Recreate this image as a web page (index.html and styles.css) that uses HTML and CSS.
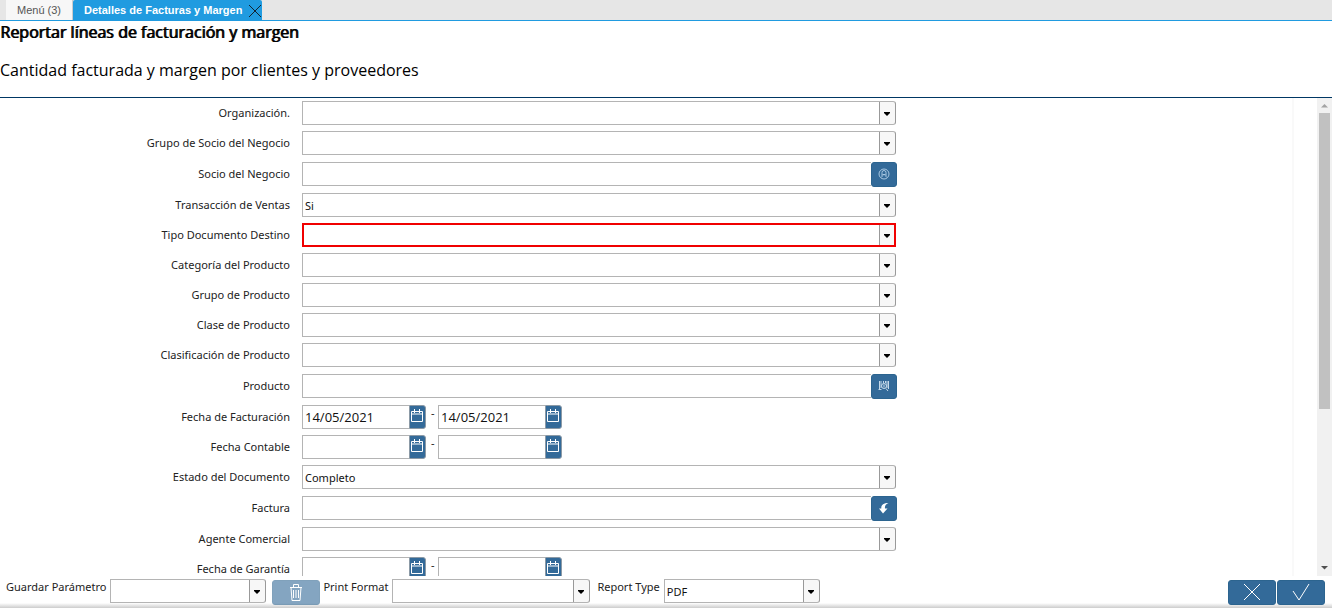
FILE: index.html
```html
<!DOCTYPE html>
<html lang="es">
<head>
    <meta charset="UTF-8">
    <meta name="viewport" content="width=device-width, initial-scale=1.0">
    <title>Detalles de Facturas y Margen</title>
    <link rel="stylesheet" href="styles.css">
</head>
<body>
<!-- Shared icons -->
<svg class="sprite" aria-hidden="true">
    <symbol id="icon-calendar" viewBox="0 0 14 14">
        <path d="M1.5 2.5h11v10h-11zM1 5h12M4.5 0v4M9.5 0v4" fill="none" stroke="#fff" stroke-width="1"/>
    </symbol>
</svg>

<nav class="tabs">
    <button type="button" class="tab">Menú (3)</button>
    <button type="button" class="tab active">Detalles de Facturas y Margen
        <svg class="tab-close" viewBox="0 0 14 14"><path d="M1 2l12 12M13 2L1 14" stroke="#12232f"/></svg>
    </button>
</nav>

<header class="heading">
    <h1>Reportar líneas de facturación y margen</h1>
    <p>Cantidad facturada y margen por clientes y proveedores</p>
</header>

<main class="content">
    <form class="params" id="params">
        <div class="row">
            <label for="org">Organización.</label>
            <select id="org" class="combo"><option></option></select>
        </div>
        <div class="row">
            <label for="bp-group">Grupo de Socio del Negocio</label>
            <select id="bp-group" class="combo"><option></option></select>
        </div>
        <div class="row lookup">
            <label for="bpartner">Socio del Negocio</label>
            <div class="field">
                <input type="text" id="bpartner">
                <button type="button" aria-label="Buscar socio">
                    <svg viewBox="0 0 12 12" width="12" height="12" fill="none" stroke="#a9c8e2"><circle cx="6" cy="6" r="5"/><path d="M4 8V4.500a2 2 0 0 1 4 0V8M4.500 6.500h3M3 9.500l2-2M9 9.500l-2-2"/></svg>
                </button>
            </div>
        </div>
        <div class="row">
            <label for="sales-trx">Transacción de Ventas</label>
            <select id="sales-trx" class="combo"><option>Si</option><option>No</option></select>
        </div>
        <div class="row">
            <label for="doctype">Tipo Documento Destino</label>
            <select id="doctype" class="combo invalid"><option></option></select>
        </div>
        <div class="row">
            <label for="category">Categoría del Producto</label>
            <select id="category" class="combo"><option></option></select>
        </div>
        <div class="row">
            <label for="product-group">Grupo de Producto</label>
            <select id="product-group" class="combo"><option></option></select>
        </div>
        <div class="row">
            <label for="product-class">Clase de Producto</label>
            <select id="product-class" class="combo"><option></option></select>
        </div>
        <div class="row">
            <label for="classification">Clasificación de Producto</label>
            <select id="classification" class="combo"><option></option></select>
        </div>
        <div class="row lookup">
            <label for="product">Producto</label>
            <div class="field">
                <input type="text" id="product">
                <button type="button" aria-label="Buscar producto">
                    <svg viewBox="0 0 12 12" width="12" height="12" fill="none" stroke="#c5daea"><path d="M1.500 1v8M3 1v7M5.500 1v2M7.500 1v2M9 1v7M10.500 1v8M.5 9.500h3M8 8.500l2 2.500"/><circle cx="6" cy="6" r="2.500"/><path d="M6 4.500v3"/></svg>
                </button>
            </div>
        </div>
        <div class="row">
            <label for="invoiced-from">Fecha de Facturación</label>
            <div class="dates">
                <div class="date"><input type="text" id="invoiced-from" value="14/05/2021"><button type="button" aria-label="Calendario"><svg width="14" height="14"><use href="#icon-calendar"/></svg></button></div>
                <span>-</span>
                <div class="date"><input type="text" aria-label="Fecha de Facturación hasta" value="14/05/2021"><button type="button" aria-label="Calendario"><svg width="14" height="14"><use href="#icon-calendar"/></svg></button></div>
            </div>
        </div>
        <div class="row">
            <label for="account-from">Fecha Contable</label>
            <div class="dates">
                <div class="date"><input type="text" id="account-from"><button type="button" aria-label="Calendario"><svg width="14" height="14"><use href="#icon-calendar"/></svg></button></div>
                <span>-</span>
                <div class="date"><input type="text" aria-label="Fecha Contable hasta"><button type="button" aria-label="Calendario"><svg width="14" height="14"><use href="#icon-calendar"/></svg></button></div>
            </div>
        </div>
        <div class="row">
            <label for="docstatus">Estado del Documento</label>
            <select id="docstatus" class="combo"><option>Completo</option></select>
        </div>
        <div class="row lookup">
            <label for="invoice">Factura</label>
            <div class="field">
                <input type="text" id="invoice">
                <button type="button" aria-label="Buscar factura">
                    <svg viewBox="0 0 12 12" width="12" height="12"><path d="M10.500 1C5.500 1 3 3 3.300 6.500H1L5 11.500l4.500-5H7C6.500 4 8 2 10.500 1z" fill="#fff"/></svg>
                </button>
            </div>
        </div>
        <div class="row">
            <label for="sales-rep">Agente Comercial</label>
            <select id="sales-rep" class="combo"><option></option></select>
        </div>
        <div class="row">
            <label for="guarantee-from">Fecha de Garantía</label>
            <div class="dates">
                <div class="date"><input type="text" id="guarantee-from"><button type="button" aria-label="Calendario"><svg width="14" height="14"><use href="#icon-calendar"/></svg></button></div>
                <span>-</span>
                <div class="date"><input type="text" aria-label="Fecha de Garantía hasta"><button type="button" aria-label="Calendario"><svg width="14" height="14"><use href="#icon-calendar"/></svg></button></div>
            </div>
        </div>
    </form>
    <div class="gutter"></div>
    <div class="scrollbar" aria-hidden="true">
        <svg viewBox="0 0 15 15" width="15" height="15"><path d="M4 9.500h7L7.500 6z" fill="#a3a3a3"/></svg>
        <div class="track"><div class="thumb"></div></div>
        <svg viewBox="0 0 15 15" width="15" height="15"><path d="M4 5h7L7.500 8.500z" fill="#505050"/></svg>
    </div>
</main>

<footer class="toolbar">
    <label for="saved">Guardar Parámetro</label>
    <select id="saved" class="combo"><option></option></select>
    <button type="button" class="action delete" disabled aria-label="Eliminar">
        <svg viewBox="0 0 16 18" width="16" height="18" fill="none" stroke="#fff"><path d="M2 3.500h12M5.500 3V.5h5V3M3 3.500l1 13h8l1-13M5.500 6v8M8 6v8M10.500 6v8"/></svg>
    </button>
    <label for="print-format">Print Format</label>
    <select id="print-format" class="combo wide"><option></option></select>
    <label for="report-type">Report Type</label>
    <select id="report-type" class="combo"><option>PDF</option></select>
    <div class="confirm">
        <button type="button" class="action" aria-label="Cancelar">
            <svg viewBox="0 0 18 18" width="18" height="18" fill="none" stroke="#fff"><path d="M1 0l16 16M17 0L1 16"/></svg>
        </button>
        <button type="submit" form="params" class="action" aria-label="Aceptar">
            <svg viewBox="0 0 18 18" width="18" height="18" fill="none" stroke="#fff"><path d="M1 7l6 9L17 0"/></svg>
        </button>
    </div>
</footer>
</body>
</html>
```

FILE: styles.css
```css
* {
    box-sizing: border-box;
}

body {
    margin: 0;
    height: 100vh;
    display: flex;
    flex-direction: column;
    overflow: hidden;
    background: #fff;
    color: #222;
    font-family: "Noto Sans", "Open Sans", sans-serif;
    font-size: 11px;
}

button, input, select {
    font: inherit;
    color: #111;
    margin: 0;
}

button {
    padding: 0;
    border: none;
    cursor: pointer;
}

svg {
    display: block;
}

.sprite {
    display: none;
}

/* Tabs */
.tabs {
    display: flex;
    flex: none;
    height: 21px;
    padding-left: 6px;
    background: #e6e6e6;
    border-bottom: 1px solid #209be0;
}

.tab {
    display: flex;
    align-items: center;
    padding: 0 11px;
    background: #f7f7f7;
    color: #555;
    font-family: "Liberation Sans", Arial, sans-serif;
    border-right: 1px solid #ccc;
}

.tab.active {
    gap: 6px;
    padding: 0 0 0 11px;
    background: #209be0;
    color: #fff;
    font-weight: bold;
    border: none;
    border-radius: 2px 2px 0 0;
}

.tab-close {
    width: 14px;
    height: 14px;
}

/* Heading */
.heading {
    flex: none;
    height: 77px;
    border-bottom: 1px solid #003764;
    color: #000;
    font-family: "Open Sans", "Noto Sans", sans-serif;
    font-size: 16px;
    line-height: 22px;
}

.heading h1 {
    margin: 0 0 16px;
    font-size: 16px;
    font-weight: normal;
    text-shadow: 1px 0 #000;
}

.heading p {
    margin: 0;
}

/* Parameters */
.content {
    display: flex;
    flex: 1;
    min-height: 0;
}

.params {
    flex: 1;
    overflow: hidden;
}

.row {
    display: grid;
    grid-template-columns: 290px minmax(0, 594px);
    column-gap: 12px;
    height: 30px;
    padding-top: 3px;
}

.row.lookup {
    grid-template-columns: 290px minmax(0, 595px);
    height: 32px;
    padding-top: 4px;
}

.row label {
    line-height: 24px;
    text-align: right;
}

input, .combo {
    height: 24px;
    padding: 1px 2px 0;
    border: 1px solid #b4b4b4;
    background-color: #fff;
    outline: none;
}

.combo {
    appearance: none;
    width: 100%;
    padding-right: 18px;
    border-right-color: #999;
    border-radius: 0 3px 3px 0;
    background-image: url("data:image/svg+xml,%3Csvg xmlns='http://www.w3.org/2000/svg' width='16' height='22'%3E%3Crect width='16' height='22' fill='%23f7f7f7'/%3E%3Cpath d='M.5 0v22' stroke='%23999'/%3E%3Cpath d='M5 10h6v1l-3 3-3-3z' fill='%23000'/%3E%3C/svg%3E");
    background-repeat: no-repeat;
    background-position: right top;
}

.combo.invalid {
    border-radius: 0;
    outline: 2px solid #f00000;
    outline-offset: -2px;
}

.field {
    display: flex;
}

.field input {
    flex: 1;
    min-width: 0;
    border-right: none;
}

.field button {
    display: flex;
    align-items: center;
    justify-content: center;
    width: 26px;
    height: 25px;
    padding-bottom: 1px;
    background: #336a99;
    border: 1px solid #2c648f;
    border-radius: 3px;
}

.dates {
    display: flex;
}

.dates span {
    width: 12px;
    padding-left: 5px;
}

.date {
    display: flex;
}

.date input {
    width: 107px;
    padding-top: 0;
    border-right: none;
    font-family: "Open Sans", "Noto Sans", sans-serif;
    font-size: 13px;
}

.date button {
    width: 17px;
    height: 24px;
    padding-bottom: 2px;
    background: #336a99;
    border: 1px solid #8c9aa6;
    border-radius: 0 3px 3px 0;
}

/* Scrollbar */
.gutter {
    width: 25px;
    border-left: 2px solid #f9f9f9;
}

.scrollbar {
    display: flex;
    flex-direction: column;
    width: 15px;
    background: #f1f1f1;
}

.track {
    flex: 1;
    padding: 0 2px;
}

.thumb {
    height: 66%;
    background: #c1c1c1;
}

/* Toolbar */
.toolbar {
    display: flex;
    flex: none;
    align-items: flex-start;
    height: 32px;
    padding: 3px 7px 0 6px;
    background: linear-gradient(#fff 27px, #ccc 32px);
}

.toolbar label {
    margin-right: 4px;
    line-height: 16px;
    white-space: nowrap;
}

.toolbar .combo {
    width: 156px;
    margin-right: 6px;
}

.toolbar .combo.wide {
    width: 198px;
    margin-right: 7px;
}

.action {
    display: flex;
    align-items: center;
    justify-content: center;
    width: 48px;
    height: 25px;
    margin-top: 1px;
    background: #336a99;
    border: 1px solid #2c648f;
    border-radius: 3px;
}

.action.delete {
    margin-right: 3px;
    opacity: 0.6;
}

.confirm {
    display: flex;
    gap: 1px;
    margin-left: auto;
}
```
